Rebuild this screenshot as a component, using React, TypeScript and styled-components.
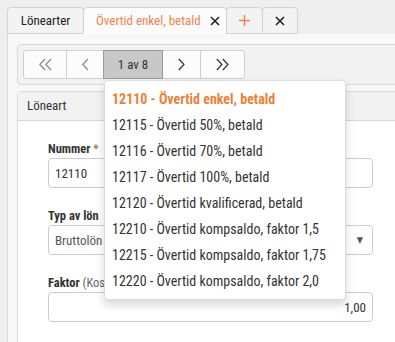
import React from 'react';
import styled, { createGlobalStyle } from 'styled-components';

const GlobalStyle = createGlobalStyle`
  html, body {
    margin: 0;
    padding: 0;
    background: #eeeeee;
    font-family: "Roboto Condensed", "Liberation Sans Narrow", "DejaVu Sans Condensed", Roboto, sans-serif;
    font-size: 13px;
    color: #333;
  }
`;

const Page = styled.div`
  width: 395px;
  height: 342px;
  overflow: hidden;
  padding: 7px 0 0 7px;
  box-sizing: border-box;
`;

const TabBar = styled.div`
  display: flex;
  align-items: flex-end;
`;

const Tab = styled.div<{ $active?: boolean; $w: number }>`
  display: flex;
  align-items: center;
  justify-content: ${(p) => (p.$active ? 'flex-start' : 'center')};
  gap: 9px;
  width: ${(p) => p.$w}px;
  height: 27px;
  padding-left: ${(p) => (p.$active ? '12px' : '0')};
  box-sizing: border-box;
  margin-left: -1px;
  border: 1px solid #d2d2d2;
  border-bottom-color: ${(p) => (p.$active ? 'transparent' : '#d2d2d2')};
  border-radius: 4px 4px 0 0;
  background: ${(p) => (p.$active ? '#fbfbfb' : '#f3f3f3')};
  color: ${(p) => (p.$active ? '#f2844a' : '#222')};
  white-space: nowrap;
  &:first-child {
    margin-left: 0;
  }
`;

const Content = styled.div`
  background: #f8f8f8;
  border-left: 1px solid #dcdcdc;
  padding: 10px 0 0 9px;
  height: 320px;
`;

const Toolbar = styled.div`
  width: 420px;
  height: 29px;
  padding: 5px;
  border: 1px solid #d8d8d8;
  border-radius: 4px;
  background: #f2f2f2;
`;

const ButtonGroup = styled.div`
  display: flex;
  width: max-content;
`;

const NavButton = styled.div<{ $w: number; $active?: boolean }>`
  position: relative;
  display: flex;
  align-items: center;
  justify-content: center;
  width: ${(p) => p.$w}px;
  height: 29px;
  box-sizing: border-box;
  margin-left: -1px;
  border: 1px solid ${(p) => (p.$active ? '#9a9a9a' : '#cfcfcf')};
  background: ${(p) => (p.$active ? '#c8c8c8' : '#fcfcfc')};
  color: #333;
  z-index: ${(p) => (p.$active ? 1 : 0)};
  &:first-child {
    margin-left: 0;
    border-radius: 3px 0 0 3px;
  }
  &:last-child {
    border-radius: 0 3px 3px 0;
  }
`;

const Menu = styled.ul`
  position: absolute;
  top: calc(100% + 2px);
  left: 0;
  z-index: 10;
  width: 242px;
  margin: 0;
  padding: 5px 0;
  list-style: none;
  background: #fff;
  border: 1px solid #dcdcdc;
  border-radius: 4px;
  box-shadow: 0 5px 10px rgba(0, 0, 0, 0.16);
  box-sizing: border-box;
`;

const MenuItem = styled.li<{ $selected?: boolean }>`
  padding: 4px 7px;
  line-height: 18px;
  font-size: 14px;
  white-space: nowrap;
  color: ${(p) => (p.$selected ? '#ee7f36' : '#333')};
  font-weight: ${(p) => (p.$selected ? 700 : 400)};
`;

const Panel = styled.div`
  width: 420px;
  margin-top: 6px;
  border: 1px solid #d8d8d8;
  border-radius: 4px;
  background: #fff;
  overflow: hidden;
`;

const PanelHeader = styled.div`
  height: 28px;
  line-height: 28px;
  padding-left: 9px;
  background: #f2f2f2;
  border-bottom: 1px solid #d8d8d8;
  color: #333;
`;

const PanelBody = styled.div`
  padding: 20px 30px 30px 30px;
  display: flex;
  flex-direction: column;
`;

const Label = styled.div`
  line-height: 16px;
  margin-bottom: 1px;
  font-size: 12.5px;
  color: #333;
  font-weight: 700;
  white-space: nowrap;
`;

const Required = styled.span`
  color: #a0693a;
  font-weight: 400;
`;

const Note = styled.span`
  color: #666;
  font-weight: 400;
`;

const Field = styled.div<{ $align?: string; $color?: string }>`
  display: flex;
  align-items: center;
  justify-content: ${(p) => (p.$align === 'right' ? 'flex-end' : 'space-between')};
  width: 325px;
  height: 30px;
  box-sizing: border-box;
  padding: 0 6px;
  margin-bottom: 20px;
  border: 1px solid #cccccc;
  border-radius: 4px;
  background: #fff;
  color: ${(p) => p.$color || '#333'};
`;

const Caret = styled.span`
  font-size: 9px;
  color: #555;
  margin-right: 3px;
`;

const Chevron = ({ dir, double, color }: { dir: 'l' | 'r'; double?: boolean; color: string }) => {
  const one = dir === 'l' ? 'M6 0.5 L0.8 6 L6 11.5' : 'M0.8 0.5 L6 6 L0.8 11.5';
  return (
    <svg width={double ? 13 : 7} height="13" viewBox={double ? '0 0 13 12' : '0 0 7 12'} fill="none">
      <path d={one} stroke={color} strokeWidth="1.2" />
      {double && <path d={one} transform="translate(6 0)" stroke={color} strokeWidth="1.2" />}
    </svg>
  );
};

const CloseIcon = () => (
  <svg width="10" height="10" viewBox="0 0 10 10">
    <path d="M1 1 L9 9 M9 1 L1 9" stroke="#222" strokeWidth="1.6" />
  </svg>
);

const PlusIcon = () => (
  <svg width="11" height="11" viewBox="0 0 11 11">
    <path d="M5.5 0 V11 M0 5.5 H11" stroke="#f2844a" strokeWidth="1.6" />
  </svg>
);

const items = [
  '12110 - Övertid enkel, betald',
  '12115 - Övertid 50%, betald',
  '12116 - Övertid 70%, betald',
  '12117 - Övertid 100%, betald',
  '12120 - Övertid kvalificerad, betald',
  '12210 - Övertid kompsaldo, faktor 1,5',
  '12215 - Övertid kompsaldo, faktor 1,75',
  '12220 - Övertid kompsaldo, faktor 2,0',
];

export default function App() {
  return (
    <Page>
      <GlobalStyle />
      <TabBar>
        <Tab $w={77}>Lönearter</Tab>
        <Tab $active $w={144}>
          Övertid enkel, betald <CloseIcon />
        </Tab>
        <Tab $w={37}>
          <PlusIcon />
        </Tab>
        <Tab $w={36}>
          <CloseIcon />
        </Tab>
      </TabBar>
      <Content>
        <Toolbar>
          <ButtonGroup>
            <NavButton $w={44}>
              <Chevron dir="l" double color="#888" />
            </NavButton>
            <NavButton $w={38}>
              <Chevron dir="l" color="#888" />
            </NavButton>
            <NavButton $w={60} $active>
              1 av 8
              <Menu>
                {items.map((t, i) => (
                  <MenuItem key={t} $selected={i === 0}>
                    {t}
                  </MenuItem>
                ))}
              </Menu>
            </NavButton>
            <NavButton $w={39}>
              <Chevron dir="r" color="#333" />
            </NavButton>
            <NavButton $w={45}>
              <Chevron dir="r" double color="#333" />
            </NavButton>
          </ButtonGroup>
        </Toolbar>
        <Panel>
          <PanelHeader>Löneart</PanelHeader>
          <PanelBody>
            <Label>
              Nummer <Required>*</Required>
            </Label>
            <Field>12110</Field>
            <Label>Typ av lön</Label>
            <Field $color="#555">
              Bruttolön <Caret>▼</Caret>
            </Field>
            <Label>
              Faktor <Note>(Kostnad)</Note>
            </Label>
            <Field $align="right">1,00</Field>
          </PanelBody>
        </Panel>
      </Content>
    </Page>
  );
}
